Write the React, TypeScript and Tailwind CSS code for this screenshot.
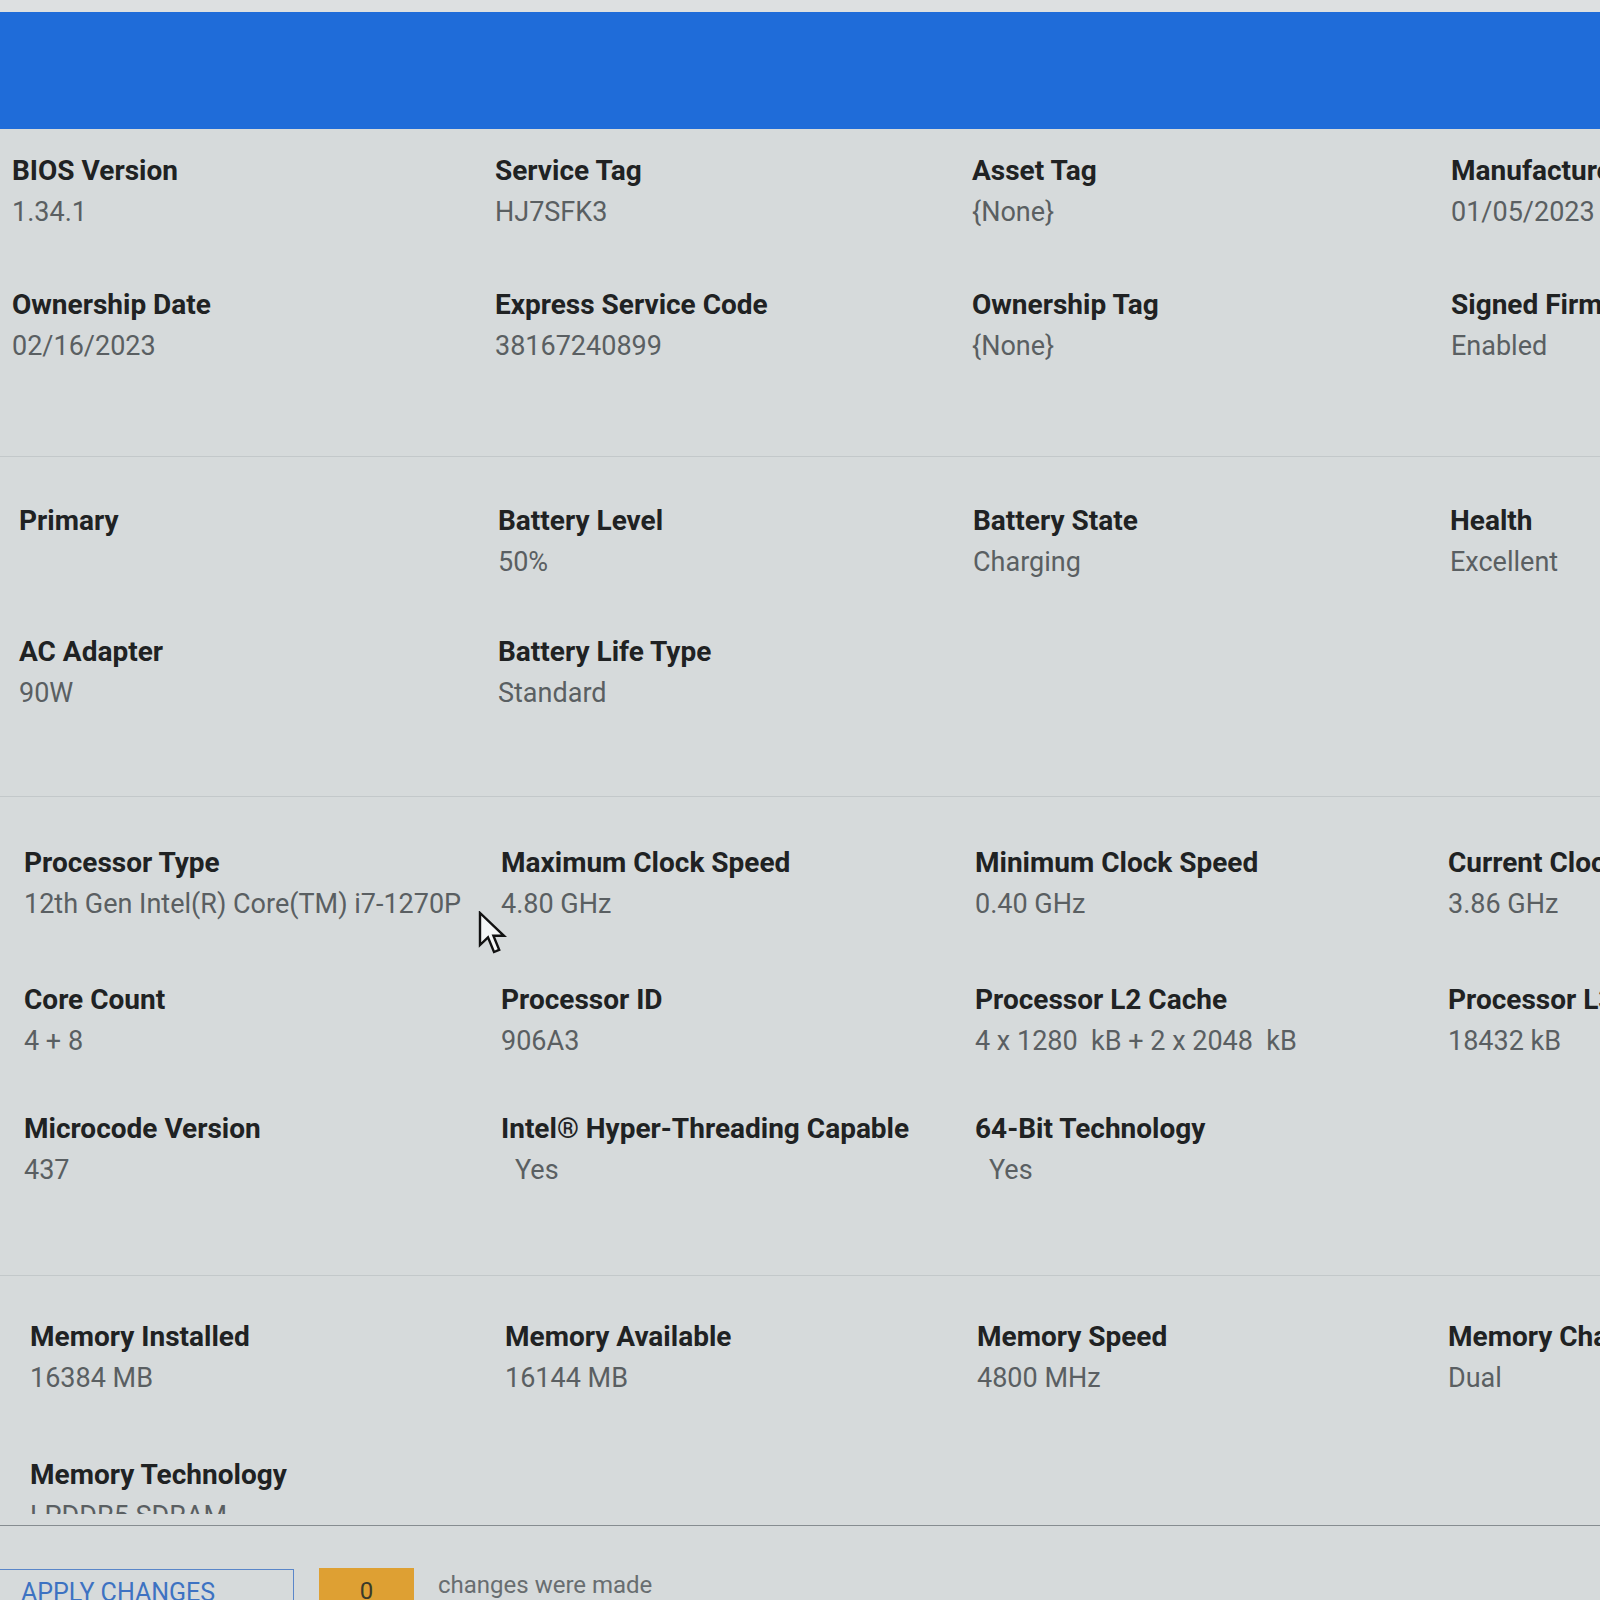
import React from 'react'

interface Field {
  label: string
  value?: string
  indent?: boolean
}

interface Section {
  pl: string
  cols: string
  pt: string
  pb: string
  rows: { mt: string; fields: Field[] }[]
  last?: boolean
}

const sections: Section[] = [
  {
    pl: 'pl-[12px]',
    cols: 'grid-cols-[483px_477px_479px_1fr]',
    pt: 'pt-[24px]',
    pb: 'pb-[92px]',
    rows: [
      {
        mt: 'mt-0',
        fields: [
          { label: 'BIOS Version', value: '1.34.1' },
          { label: 'Service Tag', value: 'HJ7SFK3' },
          { label: 'Asset Tag', value: '{None}' },
          { label: 'Manufacture Date', value: '01/05/2023' },
        ],
      },
      {
        mt: 'mt-[57px]',
        fields: [
          { label: 'Ownership Date', value: '02/16/2023' },
          { label: 'Express Service Code', value: '38167240899' },
          { label: 'Ownership Tag', value: '{None}' },
          { label: 'Signed Firmware Update', value: 'Enabled' },
        ],
      },
    ],
  },
  {
    pl: 'pl-[19px]',
    cols: 'grid-cols-[479px_475px_477px_1fr]',
    pt: 'pt-[46px]',
    pb: 'pb-[85px]',
    rows: [
      {
        mt: 'mt-0',
        fields: [
          { label: 'Primary' },
          { label: 'Battery Level', value: '50%' },
          { label: 'Battery State', value: 'Charging' },
          { label: 'Health', value: 'Excellent' },
        ],
      },
      {
        mt: 'mt-[54px]',
        fields: [
          { label: 'AC Adapter', value: '90W' },
          { label: 'Battery Life Type', value: 'Standard' },
        ],
      },
    ],
  },
  {
    pl: 'pl-[24px]',
    cols: 'grid-cols-[477px_474px_473px_1fr]',
    pt: 'pt-[48px]',
    pb: 'pb-[87px]',
    rows: [
      {
        mt: 'mt-0',
        fields: [
          { label: 'Processor Type', value: '12th Gen Intel(R) Core(TM) i7-1270P' },
          { label: 'Maximum Clock Speed', value: '4.80 GHz' },
          { label: 'Minimum Clock Speed', value: '0.40 GHz' },
          { label: 'Current Clock Speed', value: '3.86 GHz' },
        ],
      },
      {
        mt: 'mt-[60px]',
        fields: [
          { label: 'Core Count', value: '4 + 8' },
          { label: 'Processor ID', value: '906A3' },
          { label: 'Processor L2 Cache', value: '4 x 1280\u00a0 kB + 2 x 2048\u00a0 kB' },
          { label: 'Processor L3 Cache', value: '18432 kB' },
        ],
      },
      {
        mt: 'mt-[52px]',
        fields: [
          { label: 'Microcode Version', value: '437' },
          { label: 'Intel® Hyper-Threading Capable', value: 'Yes', indent: true },
          { label: '64-Bit Technology', value: 'Yes', indent: true },
        ],
      },
    ],
  },
  {
    pl: 'pl-[30px]',
    cols: 'grid-cols-[475px_472px_471px_1fr]',
    pt: 'pt-[43px]',
    pb: 'pb-[60px]',
    last: true,
    rows: [
      {
        mt: 'mt-0',
        fields: [
          { label: 'Memory Installed', value: '16384 MB' },
          { label: 'Memory Available', value: '16144 MB' },
          { label: 'Memory Speed', value: '4800 MHz' },
          { label: 'Memory Channel Mode', value: 'Dual' },
        ],
      },
      {
        mt: 'mt-[61px]',
        fields: [{ label: 'Memory Technology', value: 'LPDDR5 SDRAM' }],
      },
    ],
  },
]

function InfoField({ field }: { field: Field }) {
  return (
    <div className="flex flex-col whitespace-nowrap">
      <div className="text-[28px] leading-[36px] font-bold text-[#202223]">{field.label}</div>
      {field.value && (
        <div
          className={`text-[27px] leading-[36px] mt-[5px] text-[#5a5f62] ${field.indent ? 'pl-[14px]' : ''}`}
        >
          {field.value}
        </div>
      )}
    </div>
  )
}

function Cursor() {
  return (
    <svg
      className="absolute left-[478px] top-[911px]"
      width="30"
      height="44"
      viewBox="0 0 15 22"
    >
      <path
        d="M1 1 L1 17 L5 13.2 L8 20.5 L10.6 19.4 L7.7 12.4 L13 12.4 Z"
        fill="#f4f6f6"
        stroke="#111"
        strokeWidth="1.2"
        strokeLinejoin="miter"
      />
    </svg>
  )
}

export default function App() {
  return (
    <div
      className="relative w-[1600px] h-[1600px] overflow-hidden bg-[#d6dadb] flex flex-col"
      style={{ fontFamily: 'Roboto, "Noto Sans", sans-serif' }}
    >
      {/* top strip + blue title bar */}
      <div className="h-[12px] bg-[#dde0e1] shrink-0" />
      <div className="h-[117px] bg-[#1f6cd9] shrink-0" />

      {/* scrolling info area */}
      <div className="h-[1385px] overflow-hidden shrink-0">
        {sections.map((section, si) => (
          <div
            key={si}
            className={`${section.pl} ${section.pt} ${section.pb} ${
              section.last ? '' : 'border-b border-[#c3c8ca]'
            }`}
          >
            {section.rows.map((row, ri) => (
              <div key={ri} className={`grid ${section.cols} ${row.mt}`}>
                {row.fields.map((f) => (
                  <InfoField key={f.label} field={f} />
                ))}
              </div>
            ))}
          </div>
        ))}
      </div>

      {/* footer */}
      <div className="h-[11px] shrink-0" />
      <div className="h-[1px] bg-[#868c90] shrink-0" />
      <div className="flex items-start pt-[43px] shrink-0">
        <div className="w-[295px] h-[60px] border border-[#5a86c9] ml-[-1px] pl-[21px] pt-[8px] text-[25px] leading-[30px] text-[#3d72c2] whitespace-nowrap">
          APPLY CHANGES
        </div>
        <div className="ml-[25px] mt-[-1px] w-[95px] h-[60px] bg-[#dea033] flex justify-center pt-[8px] text-[24px] leading-[30px] text-[#3a3a2a]">
          0
        </div>
        <div className="ml-[24px] mt-[1px] text-[24px] leading-[30px] text-[#686d70] whitespace-nowrap">
          changes were made
        </div>
      </div>

      <Cursor />
    </div>
  )
}
